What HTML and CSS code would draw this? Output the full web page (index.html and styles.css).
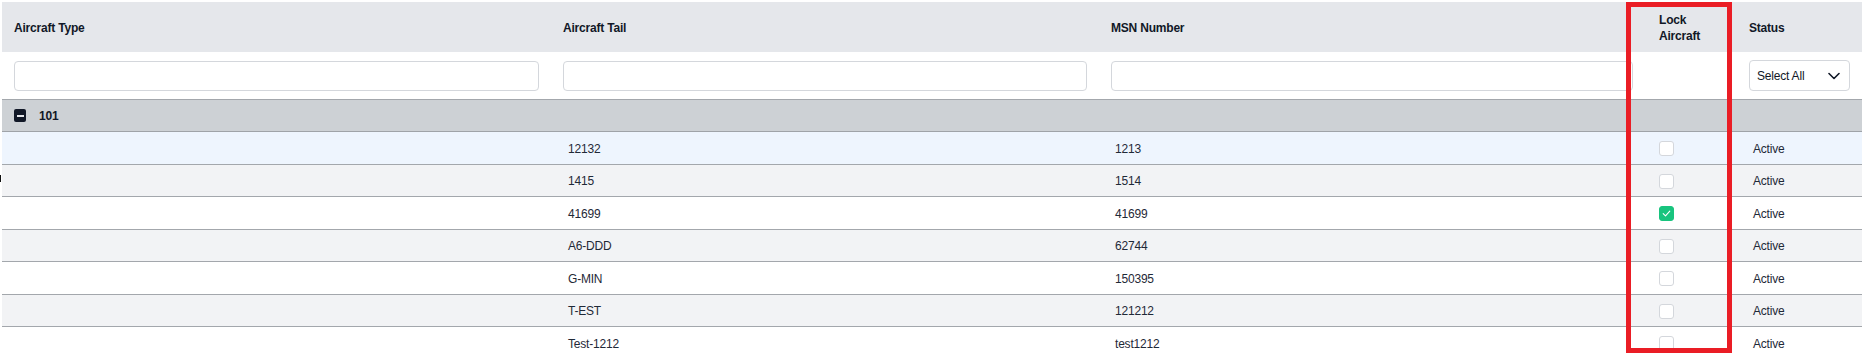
FILE: index.html
```html
<!DOCTYPE html>
<html lang="en">
<head>
<meta charset="utf-8">
<title>Aircraft</title>
<link rel="stylesheet" href="styles.css">
</head>
<body>
<div class="page">
  <div class="grid">
    <div class="row head">
      <div class="hcell">Aircraft Type</div>
      <div class="hcell">Aircraft Tail</div>
      <div class="hcell">MSN Number</div>
      <div class="hcell lockhead">Lock<br>Aircraft</div>
      <div class="hcell">Status</div>
    </div>
    <div class="row filters">
      <div class="fcell"><input class="finput" type="text"></div>
      <div class="fcell"><input class="finput" type="text"></div>
      <div class="fcell"><input class="finput" type="text"></div>
      <div class="fcell"></div>
      <div class="fcell">
        <div class="select">
          <span>Select All</span>
          <svg class="chev" width="12" height="8" viewBox="0 0 12 8"><path d="M1 1.5 L6 6.5 L11 1.5" fill="none" stroke="#111827" stroke-width="1.6" stroke-linecap="round" stroke-linejoin="round"/></svg>
        </div>
      </div>
    </div>
    <div class="group">
      <span class="collapse"><span class="bar"></span></span>
      <span class="gname">101</span>
    </div>
    <div class="row data hl">
      <div class="cell"></div><div class="cell">12132</div><div class="cell">1213</div>
      <div class="cell"><span class="cb"></span></div><div class="cell">Active</div>
    </div>
    <div class="row data alt">
      <div class="cell"></div><div class="cell">1415</div><div class="cell">1514</div>
      <div class="cell"><span class="cb"></span></div><div class="cell">Active</div>
    </div>
    <div class="row data">
      <div class="cell"></div><div class="cell">41699</div><div class="cell">41699</div>
      <div class="cell"><span class="cb on"><svg width="11" height="11" viewBox="0 0 11 11"><path d="M2.2 5.6 L4.5 7.8 L8.8 3.2" fill="none" stroke="#ffffff" stroke-width="1.1" stroke-linecap="round" stroke-linejoin="round"/></svg></span></div><div class="cell">Active</div>
    </div>
    <div class="row data alt">
      <div class="cell"></div><div class="cell">A6-DDD</div><div class="cell">62744</div>
      <div class="cell"><span class="cb"></span></div><div class="cell">Active</div>
    </div>
    <div class="row data">
      <div class="cell"></div><div class="cell">G-MIN</div><div class="cell">150395</div>
      <div class="cell"><span class="cb"></span></div><div class="cell">Active</div>
    </div>
    <div class="row data alt">
      <div class="cell"></div><div class="cell">T-EST</div><div class="cell">121212</div>
      <div class="cell"><span class="cb"></span></div><div class="cell">Active</div>
    </div>
    <div class="row data">
      <div class="cell"></div><div class="cell">Test-1212</div><div class="cell">test1212</div>
      <div class="cell"><span class="cb"></span></div><div class="cell">Active</div>
    </div>
  </div>
  <div class="mark"></div>
  <div class="highlight"></div>
</div>
</body>
</html>
```
FILE: styles.css
```css
* { box-sizing: border-box; }
html, body { margin: 0; padding: 0; background: #ffffff; overflow: hidden; }
body {
  font-family: "Liberation Sans", Arial, sans-serif;
  font-size: 12px;
  letter-spacing: -0.2px;
  color: #1f2937;
}
.page {
  position: relative;
  width: 1862px;
  height: 355px;
  padding: 2px 0 0 2px;
}
.grid { width: 1860px; }
.row {
  display: grid;
  grid-template-columns: 549px 548px 546px 92px 125px;
}
.head {
  height: 50px;
  background: #e5e7eb;
}
.hcell {
  display: flex;
  align-items: center;
  padding: 1px 12px 0;
  font-weight: 700;
  color: #111827;
  line-height: 16px;
}
.lockhead { padding-left: 14px; }
.filters {
  height: 48px;
  background: #ffffff;
  border-bottom: 1px solid #a3a7ac;
}
.fcell {
  display: flex;
  align-items: center;
  padding: 0 12px;
}
.finput {
  width: 100%;
  height: 30px;
  border: 1px solid #d4d7dc;
  border-radius: 4px;
  background: #ffffff;
  margin: 0;
  padding: 0 8px;
  font: inherit;
  outline: none;
}
.select {
  width: 100%;
  height: 31px;
  border: 1px solid #d4d7dc;
  border-radius: 4px;
  background: #ffffff;
  display: flex;
  align-items: center;
  justify-content: space-between;
  padding: 0 9px 0 7px;
  color: #111827;
}
.chev { display: block; }
.group {
  height: 32px;
  background: #cdd1d5;
  border-bottom: 1px solid #9fa3a8;
  display: flex;
  align-items: center;
  padding: 0 12px;
}
.collapse {
  width: 12px;
  height: 13px;
  border-radius: 2px;
  background: #111827;
  display: flex;
  align-items: center;
  justify-content: center;
  margin-right: 13px;
}
.bar {
  width: 7px;
  height: 2px;
  background: #e5e7eb;
}
.gname { font-weight: 700; color: #111827; }
.data {
  height: 32.5px;
  background: #ffffff;
  border-bottom: 1px solid #a3a7ac;
}
.data.alt { background: #f2f3f5; }
.data.hl { background: #eef5fe; }
.cell {
  display: flex;
  align-items: center;
  padding: 2px 12px 0 16px;
  color: #1f2937;
}
.data .cell:nth-child(4) { padding-left: 14px; }
.data .cell:nth-child(2) { padding-left: 17px; }
.cb {
  width: 15px;
  height: 15px;
  border: 1px solid #d4d7dc;
  border-radius: 3px;
  background: #ffffff;
  display: flex;
  align-items: center;
  justify-content: center;
}
.cb.on {
  background: #18c47e;
  border-color: #18c47e;
}
.mark {
  position: absolute;
  left: 0;
  top: 175px;
  width: 1px;
  height: 7px;
  background: #111111;
}
.highlight {
  position: absolute;
  left: 1626px;
  top: 2px;
  width: 106px;
  height: 351px;
  border: 5px solid #ea1d25;
  pointer-events: none;
}
```
